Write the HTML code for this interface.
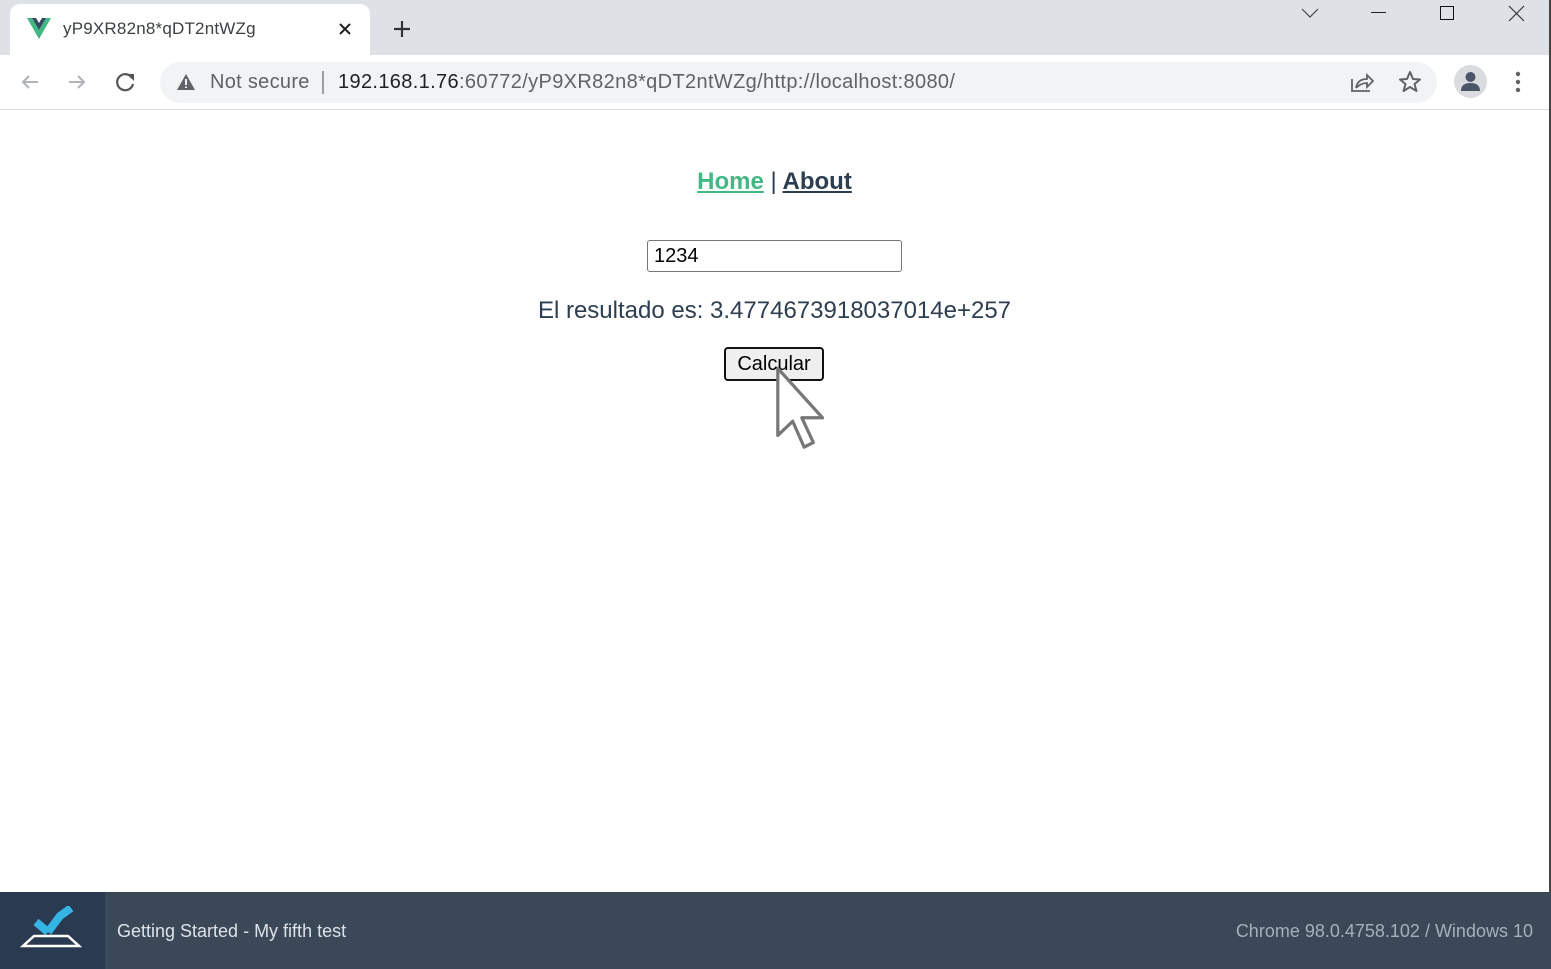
<!DOCTYPE html>
<html><head><meta charset="utf-8"><style>
*{margin:0;padding:0;box-sizing:border-box}
body{width:1551px;height:969px;position:relative;overflow:hidden;background:#fff;font-family:"Liberation Sans",sans-serif}
.top{position:absolute;left:0;top:0;width:1551px;height:55px;background:#dee1e6}
.tab{position:absolute;left:10px;top:4px;width:360px;height:51px;background:#fff;border-radius:10px 10px 0 0}
.tabt{position:absolute;left:63px;top:19px;font-size:17px;color:#3c4043;letter-spacing:0.2px}
.bar{position:absolute;left:0;top:55px;width:1551px;height:55px;background:#fff;border-bottom:1px solid #dadce0}
.omni{position:absolute;left:160px;top:62px;width:1277px;height:41px;background:#f1f3f4;border-radius:21px}
.t{position:absolute;white-space:nowrap}
.foot{position:absolute;left:0;top:892px;width:1551px;height:77px;background:#3b4858}
.logo{position:absolute;left:0;top:892px;width:105px;height:77px;background:#2a3a50}
</style></head><body>
<div class="top"></div>
<div class="tab"></div>
<svg class="t" style="left:27px;top:18px" width="24" height="21" viewBox="0 0 24 21"><path d="M0 0h5l7 12 7-12h5L12 21z" fill="#41b883"/><path d="M5 0h4l3 5 3-5h4l-7 12z" fill="#34495e"/></svg>
<div class="tabt">yP9XR82n8*qDT2ntWZg</div>
<svg class="t" style="left:338px;top:22px" width="14" height="14"><path d="M2 2l10 10M12 2L2 12" stroke="#222" stroke-width="2"/></svg>
<svg class="t" style="left:392px;top:19px" width="20" height="20"><path d="M10 2v16M2 10h16" stroke="#333" stroke-width="2.2"/></svg>
<svg class="t" style="left:1300px;top:6px" width="20" height="14"><path d="M2 3l8 8 8-8" stroke="#444" fill="none" stroke-width="1.2"/></svg>
<div class="t" style="left:1371px;top:12px;width:15px;height:1px;background:#222"></div>
<div class="t" style="left:1440px;top:6px;width:14px;height:14px;border:1px solid #111"></div>
<svg class="t" style="left:1508px;top:5px" width="17" height="17"><path d="M1 1l15 15M16 1L1 16" stroke="#333" stroke-width="1.2"/></svg>
<div class="bar"></div>
<div class="omni"></div>
<svg class="t" style="left:20px;top:72px" width="20" height="20"><path d="M18 10H3M9 4l-6 6 6 6" stroke="#b0b3b8" stroke-width="2" fill="none"/></svg>
<svg class="t" style="left:67px;top:72px" width="20" height="20"><path d="M2 10h15M11 4l6 6-6 6" stroke="#b0b3b8" stroke-width="2" fill="none"/></svg>
<svg class="t" style="left:115px;top:71px" width="22" height="22"><path d="M17 7A8 8 0 1 0 18 13" stroke="#555" stroke-width="2.2" fill="none"/><path d="M12 3h7v7z" fill="#555"/></svg>
<svg class="t" style="left:176px;top:73px" width="20" height="18"><path d="M10 1L19 17H1z" fill="#5f6368"/><path d="M10 6v6M10 13.5v1.5" stroke="#f1f3f4" stroke-width="2"/></svg>
<div class="t" style="left:210px;top:71px;font-size:20px;color:#5f6368;letter-spacing:0.3px">Not secure</div>
<div class="t" style="left:322px;top:71px;width:2px;height:23px;background:#9aa0a6"></div>
<div class="t" style="left:338px;top:71px;font-size:20px;color:#202124;letter-spacing:0.35px">192.168.1.76<span style="color:#5f6368">:60772/yP9XR82n8*qDT2ntWZg/http://localhost:8080/</span></div>
<svg class="t" style="left:1350px;top:71px" width="24" height="22"><path d="M2 8v12h18M6 17c1-6 5-9 11-9V4l6 6-6 6v-4c-5 0-8 2-11 5" stroke="#5f6368" stroke-width="1.8" fill="none"/></svg>
<svg class="t" style="left:1398px;top:70px" width="24" height="24"><path d="M12 2l3 7 7 .5-5.5 4.5 2 7-6.5-4-6.5 4 2-7L2 9.5 9 9z" stroke="#5f6368" stroke-width="2" fill="none" stroke-linejoin="round"/></svg>
<div class="t" style="left:1454px;top:65px;width:33px;height:33px;border-radius:50%;background:#dadce0"></div>
<svg class="t" style="left:1458px;top:69px" width="25" height="25"><circle cx="12.5" cy="8" r="5" fill="#4a5568"/><path d="M3 22c0-6 4-8 9.5-8s9.5 2 9.5 8z" fill="#4a5568"/></svg>
<svg class="t" style="left:1513px;top:70px" width="10" height="24"><circle cx="5" cy="4" r="2.2" fill="#5f6368"/><circle cx="5" cy="12" r="2.2" fill="#5f6368"/><circle cx="5" cy="20" r="2.2" fill="#5f6368"/></svg>
<div class="t" style="left:1549px;top:0;width:2px;height:892px;background:#444"></div>

<div class="t" style="left:0;width:1549px;top:168px;text-align:center;font-size:24px;font-weight:bold;color:#2c3e50"><span style="color:#42b983;text-decoration:underline">Home</span> <span style="font-weight:normal">|</span> <span style="text-decoration:underline">About</span></div>
<div class="t" style="left:647px;top:240px;width:255px;height:32px;border:1px solid #767676;border-radius:3px;font-size:20px;padding:4px 6px;color:#000">1234</div>
<div class="t" style="left:0;width:1549px;top:297px;text-align:center;font-size:24px;color:#2c3e50">El resultado es: 3.4774673918037014e+257</div>
<div class="t" style="left:724px;top:347px;width:100px;height:34px;border:2px solid #111;border-radius:4px;background:#efefef;font-size:20px;text-align:center;line-height:31px;color:#000">Calcular</div>
<svg class="t" style="left:774px;top:366px" width="58" height="90" viewBox="0 0 56 88"><g transform="scale(1.12 1.15)"><path d="M3 2v57l13-12 10 22 8-4-10-21h18z" fill="#fff" stroke="#777" stroke-width="2.8" stroke-linejoin="round"/></g></svg>

<div class="foot"></div>
<div class="logo"></div>
<svg class="t" style="left:20px;top:906px" width="62" height="44"><path d="M28 26L40 10 51 2M28 26l-12-10" stroke="#35b5e5" stroke-width="8" fill="none"/><path d="M3 40l11-10h34l11 10z" stroke="#fff" stroke-width="2.5" fill="none"/></svg>
<div class="t" style="left:117px;top:921px;font-size:18px;color:#dde2e8">Getting Started - My fifth test</div>
<div class="t" style="right:18px;top:921px;font-size:18px;color:#a6afba">Chrome 98.0.4758.102 / Windows 10</div>
</body></html>
